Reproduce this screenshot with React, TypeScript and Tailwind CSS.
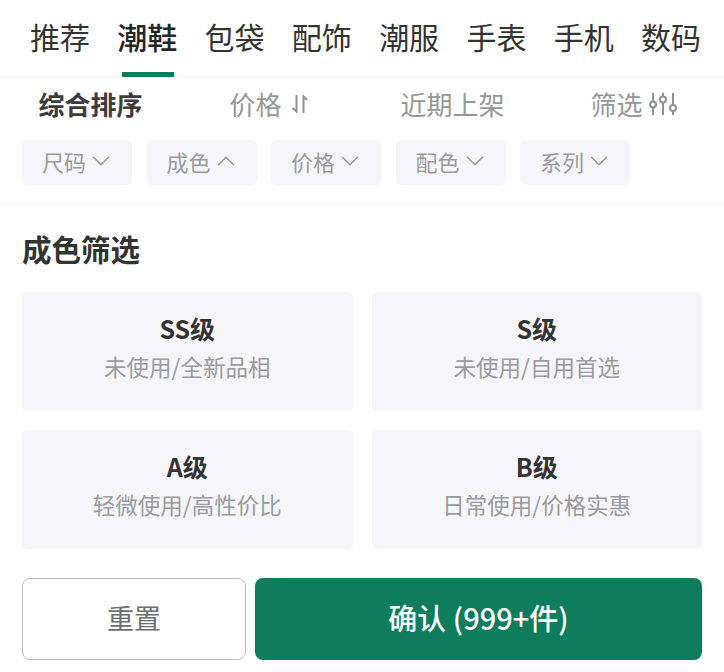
import { ChevronDown, ChevronUp } from 'lucide-react'

const tabs = ['推荐', '潮鞋', '包袋', '配饰', '潮服', '手表', '手机', '数码']
const chips = [
  { label: '尺码', open: false },
  { label: '成色', open: true },
  { label: '价格', open: false },
  { label: '配色', open: false },
  { label: '系列', open: false }
]
const grades = [
  { title: 'SS级', desc: '未使用/全新品相' },
  { title: 'S级', desc: '未使用/自用首选' },
  { title: 'A级', desc: '轻微使用/高性价比' },
  { title: 'B级', desc: '日常使用/价格实惠' }
]

const SortIcon = () => (
  <svg width="18" height="22" viewBox="0 0 18 22" fill="none" stroke="#8f9194" strokeWidth="2">
    <path d="M5.500 2v16.500L1.500 15" />
    <path d="M12.500 20V3.500l3.500 3.500" />
  </svg>
)

const FilterIcon = () => (
  <svg width="28" height="24" viewBox="0 0 28 24" fill="none" stroke="#8f9194" strokeWidth="2">
    <path d="M4 1v8.500M4 15.500V23M14 1v3.500M14 10.500V23M24 1v12M24 19v4" />
    <circle cx="4" cy="12.500" r="3" />
    <circle cx="14" cy="7.500" r="3" />
    <circle cx="24" cy="16" r="3" />
  </svg>
)

export default function App() {
  return (
    <div className="w-[724px] h-[672px] overflow-hidden bg-white font-['Noto_Sans_CJK_SC','Noto_Sans',sans-serif]">
      <div className="h-[77px] border-b border-[#f3f3f5] flex justify-between pl-[30px] pr-[23px]">
        {tabs.map((tab, i) => (
          <div key={tab} className="relative h-[77px] pt-[14px] text-[30px] leading-[44px] text-[#333]">
            <span className={i === 1 ? 'font-medium text-[#262626]' : ''}>{tab}</span>
            {i === 1 && <div className="absolute left-[5px] right-[3px] bottom-0 h-[5px] bg-[#0d7d5c]" />}
          </div>
        ))}
      </div>

      <div className="h-[53px] mb-[10px] grid grid-cols-4 items-center justify-items-center text-[26px] text-[#95979a]">
        <span className="font-bold text-[#3c3c3c]">综合排序</span>
        <span className="flex items-center gap-[9px] pr-[5px]">价格<SortIcon /></span>
        <span>近期上架</span>
        <span className="flex items-center gap-[6px]">筛选<FilterIcon /></span>
      </div>

      <div className="flex gap-[14.500px] pl-[22px] pb-[18px] border-b border-[#f5f5f7]">
        {chips.map(chip => (
          <div key={chip.label} className="w-[110px] h-[45px] pb-[3px] rounded-[5px] bg-[#f6f6fa] flex items-center justify-center text-[22px] text-[#9a9b9e]">
            {chip.label}
            {chip.open
              ? <ChevronUp size={30} strokeWidth={1.3} className="-mr-[4px]" />
              : <ChevronDown size={30} strokeWidth={1.3} className="-mr-[4px]" />}
          </div>
        ))}
      </div>

      <div className="px-[22px]">
        <h2 className="mt-[24px] text-[29.500px] leading-[40px] font-bold text-[#333]">成色筛选</h2>
        <div className="mt-[24px] grid grid-cols-2 gap-[19px]">
          {grades.map(grade => (
            <div key={grade.title} className="h-[119px] rounded-[5px] bg-[#f6f6fa] flex flex-col items-center pt-[18px]">
              <div className="text-[25px] leading-[36px] font-bold text-[#333]">{grade.title}</div>
              <div className="mt-[4px] text-[22.500px] leading-[32px] text-[#9a9b9e]">{grade.desc}</div>
            </div>
          ))}
        </div>
        <div className="mt-[29px] flex gap-[9px]">
          <button className="w-[224px] h-[82px] pb-[2px] rounded-[8px] border border-[#bdbdbd] bg-white text-[27px] text-[#6e6e6e]">重置</button>
          <button className="w-[447px] h-[82px] pb-[2px] rounded-[8px] bg-[#0d7d5c] text-[29px] font-medium text-white">确认 (999+件)</button>
        </div>
      </div>
    </div>
  )
}
